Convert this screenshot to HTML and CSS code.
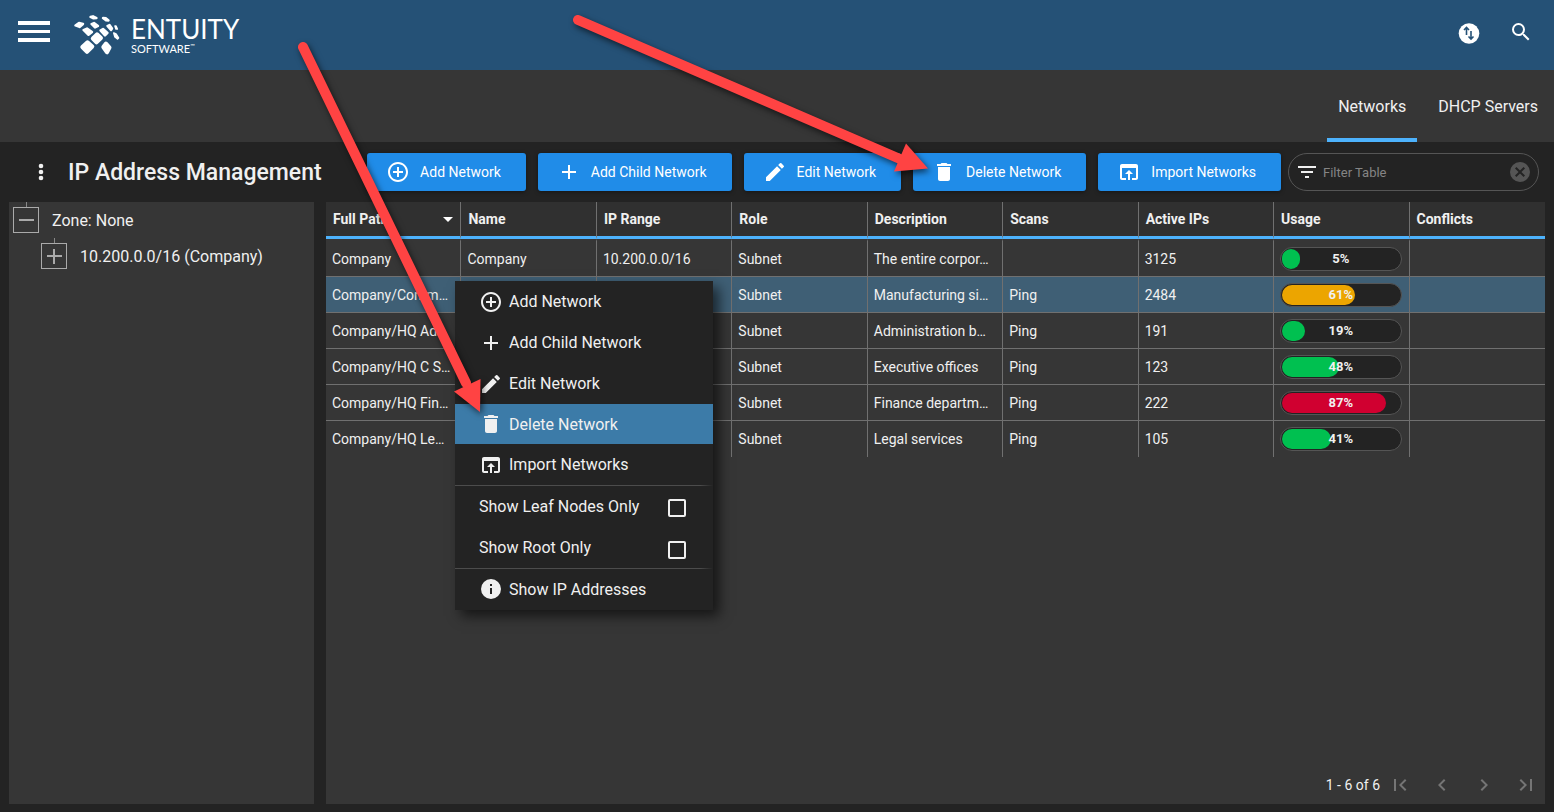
FILE: index.html
```html
<!DOCTYPE html>
<html lang="en">
<head>
    <meta charset="UTF-8">
    <meta name="viewport" content="width=device-width, initial-scale=1.0">
    <title>IP Address Management</title>
    <link rel="stylesheet" href="styles.css">
</head>
<body>
    <!-- icon sprite -->
    <svg class="sprite" aria-hidden="true">
        <symbol id="i-add-circle" viewBox="0 0 24 24"><path d="M13 7h-2v4H7v2h4v4h2v-4h4v-2h-4V7zm-1-5C6.48 2 2 6.48 2 12s4.480 10 10 10 10-4.480 10-10S17.520 2 12 2zm0 18c-4.410 0-8-3.590-8-8s3.590-8 8-8 8 3.590 8 8-3.590 8-8 8z"/></symbol>
        <symbol id="i-add" viewBox="0 0 24 24"><path d="M19 13h-6v6h-2v-6H5v-2h6V5h2v6h6v2z"/></symbol>
        <symbol id="i-edit" viewBox="0 0 24 24"><path d="M3 17.250V21h3.750L17.810 9.940l-3.750-3.750L3 17.250zM20.710 7.040a1 1 0 0 0 0-1.410l-2.340-2.340a1 1 0 0 0-1.410 0l-1.830 1.830 3.750 3.750 1.830-1.830z"/></symbol>
        <symbol id="i-delete" viewBox="0 0 24 24"><path d="M6 19c0 1.100.9 2 2 2h8c1.100 0 2-.9 2-2V7H6v12zM19 4h-3.500l-1-1h-5l-1 1H5v2h14V4z"/></symbol>
        <symbol id="i-import" viewBox="0 0 24 24"><path d="M19 4H5c-1.110 0-2 .9-2 2v12c0 1.100.89 2 2 2h4v-2H5V8h14v10h-4v2h4c1.100 0 2-.9 2-2V6c0-1.100-.89-2-2-2zm-7 6l-4 4h3v6h2v-6h3l-4-4z"/></symbol>
        <symbol id="i-info" viewBox="0 0 24 24"><path d="M12 2a10 10 0 1 0 0 20 10 10 0 0 0 0-20zm1 15h-2v-6h2v6zm0-8h-2V7h2v2z"/></symbol>
    </svg>

    <header class="header">
        <button class="icon-btn" aria-label="Main menu">
            <svg class="burger" viewBox="0 0 32 22"><path d="M0 0h32v4H0zM0 9h32v3H0zM0 17h32v4H0z"/></svg>
        </button>
        <a class="logo" href="#">
            <svg class="logo-mark" viewBox="0 0 46 40">
                <path d="M16.500 2L19 1.300L22.500 3L19.500 3.300z"/>
                <path d="M29 3L32 3.300L34.500 5.500L32 5.300z"/>
                <path d="M1.500 10.500L5 8L9 9L5.500 12z"/>
                <path d="M17.500 9L20 8L24 11L21 12.500z"/>
                <path d="M9.500 15L13 13.500L18 17L14.500 19.800z"/>
                <path d="M33.500 11L35.500 10L38 13.500L37 15z"/>
                <path class="thin" d="M41 11L42 11L43.300 14L42 14z"/>
                <path d="M26.500 15.500L29 14L33.500 18L31 20.500z"/>
                <path class="thin" d="M39.800 18L42 19L44.500 23L43.500 24L41 22z"/>
                <path class="big" d="M18.800 23.500L23 19.300L27 23L22.500 27.300z"/>
                <path class="big" d="M8.300 32L13.500 27.300L18.300 31.500L13 36.800z"/>
                <path class="big" d="M29.300 32L32 28.500L35.500 32.500L33 37.300z"/>
            </svg>
            <span class="logo-text">
                <span class="logo-name">ENTUITY</span>
                <span class="logo-sub">SOFTWARE<sup>™</sup></span>
            </span>
        </a>
        <div class="header-actions">
            <button class="icon-btn" aria-label="Data transfer">
                <svg class="icon" viewBox="0 0 24 24"><circle cx="12" cy="13.500" r="10.300"/><path class="swap" d="M9.500 15V8.500M7 10L9.500 7.500 12 10M14 11v7.500m-2.500-2L14 19l2.500-2.500"/></svg>
            </button>
            <button class="icon-btn" aria-label="Search">
                <svg class="icon" viewBox="0 0 24 24"><path d="M15.500 14h-.79l-.28-.27A6.470 6.470 0 0 0 16 9.500 6.500 6.500 0 1 0 9.500 16c1.610 0 3.090-.59 4.230-1.570l.27.28v.79l5 4.990L20.490 19l-4.990-5zm-6 0a4.500 4.500 0 1 1 0-9 4.500 4.500 0 0 1 0 9z"/></svg>
            </button>
        </div>
    </header>

    <nav class="tabs">
        <a class="tab active" href="#">Networks</a>
        <a class="tab" href="#">DHCP Servers</a>
    </nav>

    <div class="toolbar">
        <button class="icon-btn" aria-label="More options">
            <svg class="icon" viewBox="0 0 24 24"><circle cx="12" cy="6" r="2.300"/><circle cx="12" cy="12" r="2.300"/><circle cx="12" cy="18" r="2.300"/></svg>
        </button>
        <h1>IP Address Management</h1>
        <div class="buttons">
            <button class="btn"><svg class="icon"><use href="#i-add-circle"/></svg>Add Network</button>
            <button class="btn"><svg class="icon"><use href="#i-add"/></svg>Add Child Network</button>
            <button class="btn"><svg class="icon"><use href="#i-edit"/></svg>Edit Network</button>
            <button class="btn"><svg class="icon"><use href="#i-delete"/></svg>Delete Network</button>
            <button class="btn"><svg class="icon"><use href="#i-import"/></svg>Import Networks</button>
        </div>
        <div class="filter">
            <svg class="icon" viewBox="0 0 24 24"><path d="M10 18h4v-2h-4v2zM3 6v2h18V6H3zm3 7h12v-2H6v2z"/></svg>
            <input type="text" placeholder="Filter Table" aria-label="Filter Table">
            <button class="icon-btn clear" aria-label="Clear filter">
                <svg class="icon" viewBox="0 0 24 24"><path d="M12 2a10 10 0 1 0 0 20 10 10 0 0 0 0-20zm5 13.590L15.590 17 12 13.410 8.410 17 7 15.590 10.590 12 7 8.410 8.410 7 12 10.590 15.590 7 17 8.410 13.410 12 17 15.590z"/></svg>
            </button>
        </div>
    </div>

    <main class="content">
        <aside class="panel tree">
            <div class="node">
                <button class="toggle" aria-label="Collapse"><svg viewBox="0 0 24 24"><path d="M5 12h15"/></svg></button>
                <span>Zone: None</span>
            </div>
            <div class="node child">
                <button class="toggle" aria-label="Expand"><svg viewBox="0 0 24 24"><path d="M5 12h15M12 5v15"/></svg></button>
                <span>10.200.0.0/16 (Company)</span>
            </div>
        </aside>

        <section class="panel networks">
            <table>
                <thead>
                    <tr>
                        <th><span class="sorted">Full Path <svg viewBox="0 0 10 5"><path d="M0 0h10L5 5z"/></svg></span></th>
                        <th>Name</th>
                        <th>IP Range</th>
                        <th>Role</th>
                        <th>Description</th>
                        <th>Scans</th>
                        <th>Active IPs</th>
                        <th>Usage</th>
                        <th>Conflicts</th>
                    </tr>
                </thead>
                <tbody>
                    <tr>
                        <td>Company</td><td>Company</td><td>10.200.0.0/16</td><td>Subnet</td>
                        <td>The entire corpor…</td><td></td><td>3125</td>
                        <td><div class="usage"><div class="fill" style="width: 5%"></div><span>5%</span></div></td><td></td>
                    </tr>
                    <tr class="selected">
                        <td>Company/Comm…</td><td></td><td></td><td>Subnet</td>
                        <td>Manufacturing si…</td><td>Ping</td><td>2484</td>
                        <td><div class="usage"><div class="fill warn" style="width: 61%"></div><span>61%</span></div></td><td></td>
                    </tr>
                    <tr>
                        <td>Company/HQ Ad…</td><td></td><td></td><td>Subnet</td>
                        <td>Administration b…</td><td>Ping</td><td>191</td>
                        <td><div class="usage"><div class="fill" style="width: 19%"></div><span>19%</span></div></td><td></td>
                    </tr>
                    <tr>
                        <td>Company/HQ C S…</td><td></td><td></td><td>Subnet</td>
                        <td>Executive offices</td><td>Ping</td><td>123</td>
                        <td><div class="usage"><div class="fill" style="width: 48%"></div><span>48%</span></div></td><td></td>
                    </tr>
                    <tr>
                        <td>Company/HQ Fin…</td><td></td><td></td><td>Subnet</td>
                        <td>Finance departm…</td><td>Ping</td><td>222</td>
                        <td><div class="usage"><div class="fill high" style="width: 87%"></div><span>87%</span></div></td><td></td>
                    </tr>
                    <tr>
                        <td>Company/HQ Le…</td><td></td><td></td><td>Subnet</td>
                        <td>Legal services</td><td>Ping</td><td>105</td>
                        <td><div class="usage"><div class="fill" style="width: 41%"></div><span>41%</span></div></td><td></td>
                    </tr>
                </tbody>
            </table>

            <div class="menu">
                <button class="menu-item"><svg class="icon"><use href="#i-add-circle"/></svg>Add Network</button>
                <button class="menu-item"><svg class="icon"><use href="#i-add"/></svg>Add Child Network</button>
                <button class="menu-item"><svg class="icon"><use href="#i-edit"/></svg>Edit Network</button>
                <button class="menu-item hover"><svg class="icon"><use href="#i-delete"/></svg>Delete Network</button>
                <button class="menu-item"><svg class="icon"><use href="#i-import"/></svg>Import Networks</button>
                <label class="menu-item check divider">Show Leaf Nodes Only <input type="checkbox"></label>
                <label class="menu-item check">Show Root Only <input type="checkbox"></label>
                <button class="menu-item divider"><svg class="icon"><use href="#i-info"/></svg>Show IP Addresses</button>
            </div>

            <div class="pager">
                <span>1 - 6 of 6</span>
                <button class="icon-btn" aria-label="First page"><svg class="icon" viewBox="0 0 24 24"><path d="M18.410 16.590L13.820 12l4.590-4.590L17 6l-6 6 6 6zM6 6h2v12H6z"/></svg></button>
                <button class="icon-btn" aria-label="Previous page"><svg class="icon" viewBox="0 0 24 24"><path d="M15.410 7.410L14 6l-6 6 6 6 1.410-1.410L10.830 12z"/></svg></button>
                <button class="icon-btn" aria-label="Next page"><svg class="icon" viewBox="0 0 24 24"><path d="M10 6L8.590 7.410 13.170 12l-4.580 4.590L10 18l6-6z"/></svg></button>
                <button class="icon-btn" aria-label="Last page"><svg class="icon" viewBox="0 0 24 24"><path d="M5.590 7.410L10.180 12l-4.590 4.590L7 18l6-6-6-6zM16 6h2v12h-2z"/></svg></button>
            </div>
        </section>
    </main>

    <!-- callout arrows -->
    <svg class="arrow arrow-menu" viewBox="0 0 200 390" aria-hidden="true">
        <path class="shaft" d="M13 17L176 353"/>
        <path d="M190 382L164 361.500L190.500 349z"/>
    </svg>
    <svg class="arrow arrow-button" viewBox="0 0 380 180" aria-hidden="true">
        <path class="shaft" d="M18 10L340 149"/>
        <path d="M368 158.500L346 133.500L334 161.500z"/>
    </svg>
</body>
</html>
```

FILE: styles.css
```css
* {
    box-sizing: border-box;
}

body {
    margin: 0;
    min-height: 100vh;
    display: flex;
    flex-direction: column;
    position: relative;
    background: #232323;
    color: #f0f0f0;
    font-family: Roboto, "Liberation Sans", sans-serif;
    font-size: 16px;
}

button,
input {
    font-family: inherit;
    color: inherit;
}

.sprite {
    position: absolute;
    width: 0;
    height: 0;
}

.icon {
    width: 24px;
    height: 24px;
    flex: none;
    fill: currentColor;
}

.icon-btn {
    display: flex;
    padding: 0;
    border: 0;
    background: none;
    cursor: pointer;
}

/* header */
.header {
    display: flex;
    align-items: center;
    height: 70px;
    padding: 0 21px 6px 18px;
    background: #255176;
    color: #fff;
}

.burger {
    width: 32px;
    height: 22px;
    fill: #fff;
}

.logo {
    display: flex;
    align-items: center;
    gap: 11px;
    margin: 6px 0 0 24px;
    color: #fff;
    text-decoration: none;
}

.logo-mark {
    width: 46px;
    height: 40px;
    fill: #fff;
    stroke: #fff;
    stroke-width: 2.400;
    stroke-linejoin: round;
}

.logo-mark .thin {
    stroke-width: 1.600;
}

.logo-mark .big {
    stroke-width: 4;
}

.logo-text {
    display: flex;
    flex-direction: column;
    padding-top: 2px;
    font-family: Lato, sans-serif;
}

.logo-name {
    font-size: 26px;
    line-height: 25px;
}

.logo-sub {
    font-size: 11px;
    line-height: 13px;
}

.logo-sub sup {
    font-size: 6px;
    line-height: 1px;
}

.header-actions {
    display: flex;
    gap: 28px;
    margin-left: auto;
}

.swap {
    fill: none;
    stroke: #255176;
    stroke-width: 1.600;
}

/* tabs */
.tabs {
    display: flex;
    justify-content: flex-end;
    gap: 10px;
    height: 72px;
    padding-right: 5px;
    background: #363636;
}

.tab {
    display: flex;
    align-items: center;
    padding: 4px 11px 0;
    border-bottom: 4px solid transparent;
    color: #f0f0f0;
    text-decoration: none;
}

.tab.active {
    border-color: #4db2fc;
}

/* toolbar */
.toolbar {
    display: flex;
    align-items: center;
    height: 60px;
    padding: 0 15px 0 29px;
}

h1 {
    margin: 0 0 0 15px;
    font-size: 23px;
    font-weight: 500;
    white-space: nowrap;
}

.buttons {
    display: flex;
    gap: 12px;
    margin-left: auto;
}

.btn {
    display: flex;
    align-items: center;
    gap: 10px;
    height: 38px;
    padding: 0 25px 0 19px;
    border: 0;
    border-radius: 3px;
    background: #208ce8;
    color: #fff;
    font-size: 14px;
    white-space: nowrap;
    box-shadow: 0 1px 4px rgba(0, 0, 0, 0.4);
    cursor: pointer;
}

.filter {
    display: flex;
    align-items: center;
    width: 251px;
    height: 38px;
    margin-left: 7px;
    padding: 0 6px;
    border: 1px solid #555;
    border-radius: 19px;
}

.filter input {
    flex: 1;
    min-width: 0;
    padding: 0 4px;
    border: 0;
    outline: 0;
    background: none;
    font-size: 13px;
}

.filter input::placeholder {
    color: #858585;
}

.clear {
    color: #555;
}

/* panels */
.content {
    flex: 1;
    display: flex;
    gap: 12px;
    padding: 0 9px 8px;
}

.panel {
    background: #363636;
}

.tree {
    width: 305px;
    flex: none;
    padding-left: 4px;
}

.node {
    display: flex;
    align-items: center;
    gap: 13px;
    height: 36px;
}

.node.child {
    padding-left: 28px;
}

.toggle {
    position: relative;
    width: 26px;
    height: 26px;
    padding: 0;
    border: 1px solid #aaa;
    background: none;
}

.toggle::before {
    content: "";
    position: absolute;
    left: 12px;
    top: -6px;
    height: 5px;
    border-left: 1px dashed #888;
}

.toggle svg {
    display: block;
    width: 24px;
    height: 24px;
    stroke: #aaa;
    stroke-width: 2;
}

.networks {
    flex: 1;
    min-width: 0;
    display: flex;
    flex-direction: column;
    position: relative;
}

/* table */
table {
    width: 100%;
    table-layout: fixed;
    border-spacing: 0;
    font-size: 14px;
}

th,
td {
    border-right: 1px solid #707070;
    text-align: left;
    white-space: nowrap;
    overflow: hidden;
    text-overflow: ellipsis;
}

th {
    height: 37px;
    padding: 0 7px;
    border-bottom: 3px solid #4db2fc;
    background: #303030;
    font-weight: 700;
}

td {
    height: 36px;
    padding: 0 7px 0 6px;
    border-bottom: 1px solid #707070;
}

th:last-child,
td:last-child {
    border-right: 0;
}

tbody tr:first-child td {
    height: 38px;
    border-top: 2px solid #363636;
}

tbody tr:last-child td {
    border-bottom: 0;
}

.selected td {
    background: #3f5f75;
}

.sorted {
    display: flex;
    justify-content: space-between;
    align-items: center;
}

.sorted svg {
    width: 10px;
    height: 5px;
    fill: #fff;
}

.usage {
    position: relative;
    height: 24px;
    border: 1px solid #555;
    border-radius: 12px;
    background: #232323;
    font-size: 13px;
    font-weight: 700;
    line-height: 22px;
    text-align: center;
}

.fill {
    position: absolute;
    left: 1px;
    top: 1px;
    bottom: 1px;
    min-width: 18px;
    border-radius: 10px;
    background: #00c050;
}

.fill.warn {
    background: #eca500;
}

.fill.high {
    background: #d00030;
}

.usage span {
    position: relative;
}

/* context menu */
.menu {
    position: absolute;
    left: 129px;
    top: 79px;
    width: 258px;
    background: #232323;
    box-shadow: 6px 6px 12px rgba(0, 0, 0, 0.6);
}

.menu-item {
    display: flex;
    align-items: center;
    gap: 6px;
    width: 100%;
    height: 41px;
    padding: 0 27px 0 24px;
    border: 0;
    background: none;
    font-size: 16px;
    cursor: pointer;
}

.menu-item.hover {
    height: 40px;
    background: #3c7ba8;
}

.menu-item.divider {
    height: 42px;
    background: linear-gradient(to right, #4c4c4c 95%, #232323) top / 100% 1px no-repeat;
}

.menu-item.check {
    justify-content: space-between;
}

.menu-item input {
    appearance: none;
    width: 18px;
    height: 18px;
    margin: 4px 0 0;
    border: 2px solid #f0f0f0;
    border-radius: 2px;
}

/* pager */
.pager {
    display: flex;
    align-items: center;
    justify-content: flex-end;
    gap: 18px;
    margin-top: auto;
    padding: 0 7px 7px;
    font-size: 14px;
}

.pager span {
    margin-right: -10px;
}

.pager .icon {
    color: #757575;
}

/* arrows */
.arrow {
    position: absolute;
    fill: #ff4343;
    filter: drop-shadow(2px 3px 3px rgba(0, 0, 0, 0.6));
    pointer-events: none;
}

.arrow .shaft {
    fill: none;
    stroke: #ff4343;
    stroke-width: 10;
    stroke-linecap: round;
}

.arrow-menu {
    left: 290px;
    top: 30px;
    width: 200px;
    height: 390px;
}

.arrow-button {
    left: 560px;
    top: 10px;
    width: 380px;
    height: 180px;
}
```
